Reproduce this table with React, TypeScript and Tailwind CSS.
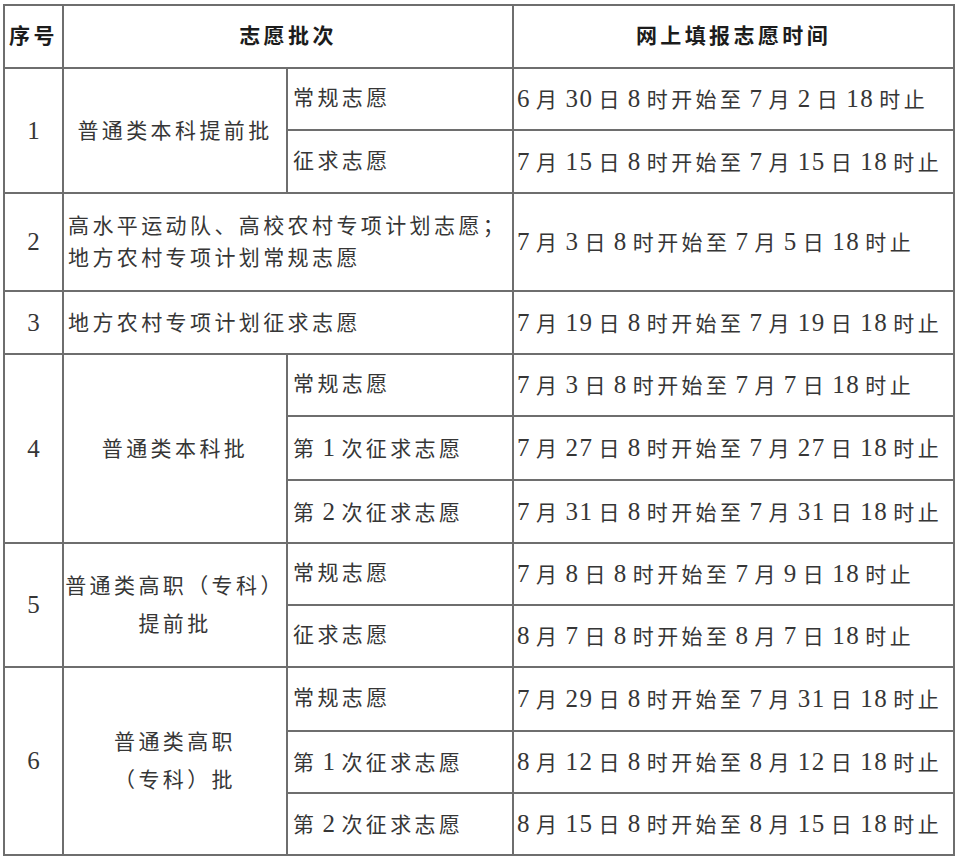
type Sub = { name: string; time: string; h: string }
type Group =
  | { no: string; label: string[]; subs: Sub[] }
  | { no: string; span: string[]; time: string; h: string }

const GROUPS: Group[] = [
  {
    no: '1',
    label: ['普通类本科提前批'],
    subs: [
      { name: '常规志愿', time: '6月30日8时开始至7月2日18时止', h: 'h-[62px]' },
      { name: '征求志愿', time: '7月15日8时开始至7月15日18时止', h: 'h-[63px]' },
    ],
  },
  {
    no: '2',
    span: ['高水平运动队、高校农村专项计划志愿；', '地方农村专项计划常规志愿'],
    time: '7月3日8时开始至7月5日18时止',
    h: 'h-[98px]',
  },
  { no: '3', span: ['地方农村专项计划征求志愿'], time: '7月19日8时开始至7月19日18时止', h: 'h-[63px]' },
  {
    no: '4',
    label: ['普通类本科批'],
    subs: [
      { name: '常规志愿', time: '7月3日8时开始至7月7日18时止', h: 'h-[62px]' },
      { name: '第1次征求志愿', time: '7月27日8时开始至7月27日18时止', h: 'h-[64px]' },
      { name: '第2次征求志愿', time: '7月31日8时开始至7月31日18时止', h: 'h-[63px]' },
    ],
  },
  {
    no: '5',
    label: ['普通类高职（专科）', '提前批'],
    subs: [
      { name: '常规志愿', time: '7月8日8时开始至7月9日18时止', h: 'h-[62px]' },
      { name: '征求志愿', time: '8月7日8时开始至8月7日18时止', h: 'h-[62px]' },
    ],
  },
  {
    no: '6',
    label: ['普通类高职', '（专科）批'],
    subs: [
      { name: '常规志愿', time: '7月29日8时开始至7月31日18时止', h: 'h-[64px]' },
      { name: '第1次征求志愿', time: '8月12日8时开始至8月12日18时止', h: 'h-[62px]' },
      { name: '第2次征求志愿', time: '8月15日8时开始至8月15日18时止', h: 'h-[62px]' },
    ],
  },
]

// digits are set a little larger in the serif face, with Word-style gaps around them
function Rich({ text }: { text: string }) {
  return (
    <>
      {text.split(/(\d+)/).map((part, i) =>
        /^\d+$/.test(part) ? (
          <span key={i} className="px-[5px] text-[25px] tracking-[1.5px]">
            {part}
          </span>
        ) : (
          <span key={i}>{part}</span>
        ),
      )}
    </>
  )
}

const CELL = 'border-2 border-[#6e6e6e] p-0 align-middle'

export default function App() {
  return (
    <div
      className="min-h-[862px] bg-white pl-[3px] pt-[4px] text-[21px] tracking-[3.4px] text-[#363636]"
      style={{ fontFamily: '"Liberation Serif", "Noto Sans CJK SC", serif' }}
    >
      <table className="table-fixed border-collapse">
        <colgroup>
          <col className="w-[59px]" />
          <col className="w-[224px]" />
          <col className="w-[226px]" />
          <col className="w-[441px]" />
        </colgroup>
        <thead>
          <tr className="h-[63px] font-bold text-[#1c1c1c]">
            <th className={`${CELL} text-center`}>序号</th>
            <th colSpan={2} className={`${CELL} text-center`}>
              志愿批次
            </th>
            <th className={`${CELL} text-center`}>网上填报志愿时间</th>
          </tr>
        </thead>
        <tbody>
          {GROUPS.map((g) =>
            'subs' in g ? (
              g.subs.map((s, i) => (
                <tr key={`${g.no}-${i}`} className={s.h}>
                  {i === 0 && (
                    <>
                      <td rowSpan={g.subs.length} className={`${CELL} text-center text-[25px] tracking-normal`}>
                        {g.no}
                      </td>
                      <td rowSpan={g.subs.length} className={`${CELL} text-center leading-[38px] whitespace-nowrap`}>
                        {g.label.map((l) => (
                          <div key={l}>{l}</div>
                        ))}
                      </td>
                    </>
                  )}
                  <td className={`${CELL} pl-[5px] whitespace-nowrap`}>
                    <Rich text={s.name} />
                  </td>
                  <td className={`${CELL} -indent-[2px] whitespace-nowrap`}>
                    <Rich text={s.time} />
                  </td>
                </tr>
              ))
            ) : (
              <tr key={g.no} className={g.h}>
                <td className={`${CELL} text-center text-[25px] tracking-normal`}>{g.no}</td>
                <td colSpan={2} className={`${CELL} pl-[4px] leading-[32px] whitespace-nowrap`}>
                  {g.span.map((l) => (
                    <div key={l}>{l}</div>
                  ))}
                </td>
                <td className={`${CELL} -indent-[2px] whitespace-nowrap`}>
                  <Rich text={g.time} />
                </td>
              </tr>
            ),
          )}
        </tbody>
      </table>
    </div>
  )
}
